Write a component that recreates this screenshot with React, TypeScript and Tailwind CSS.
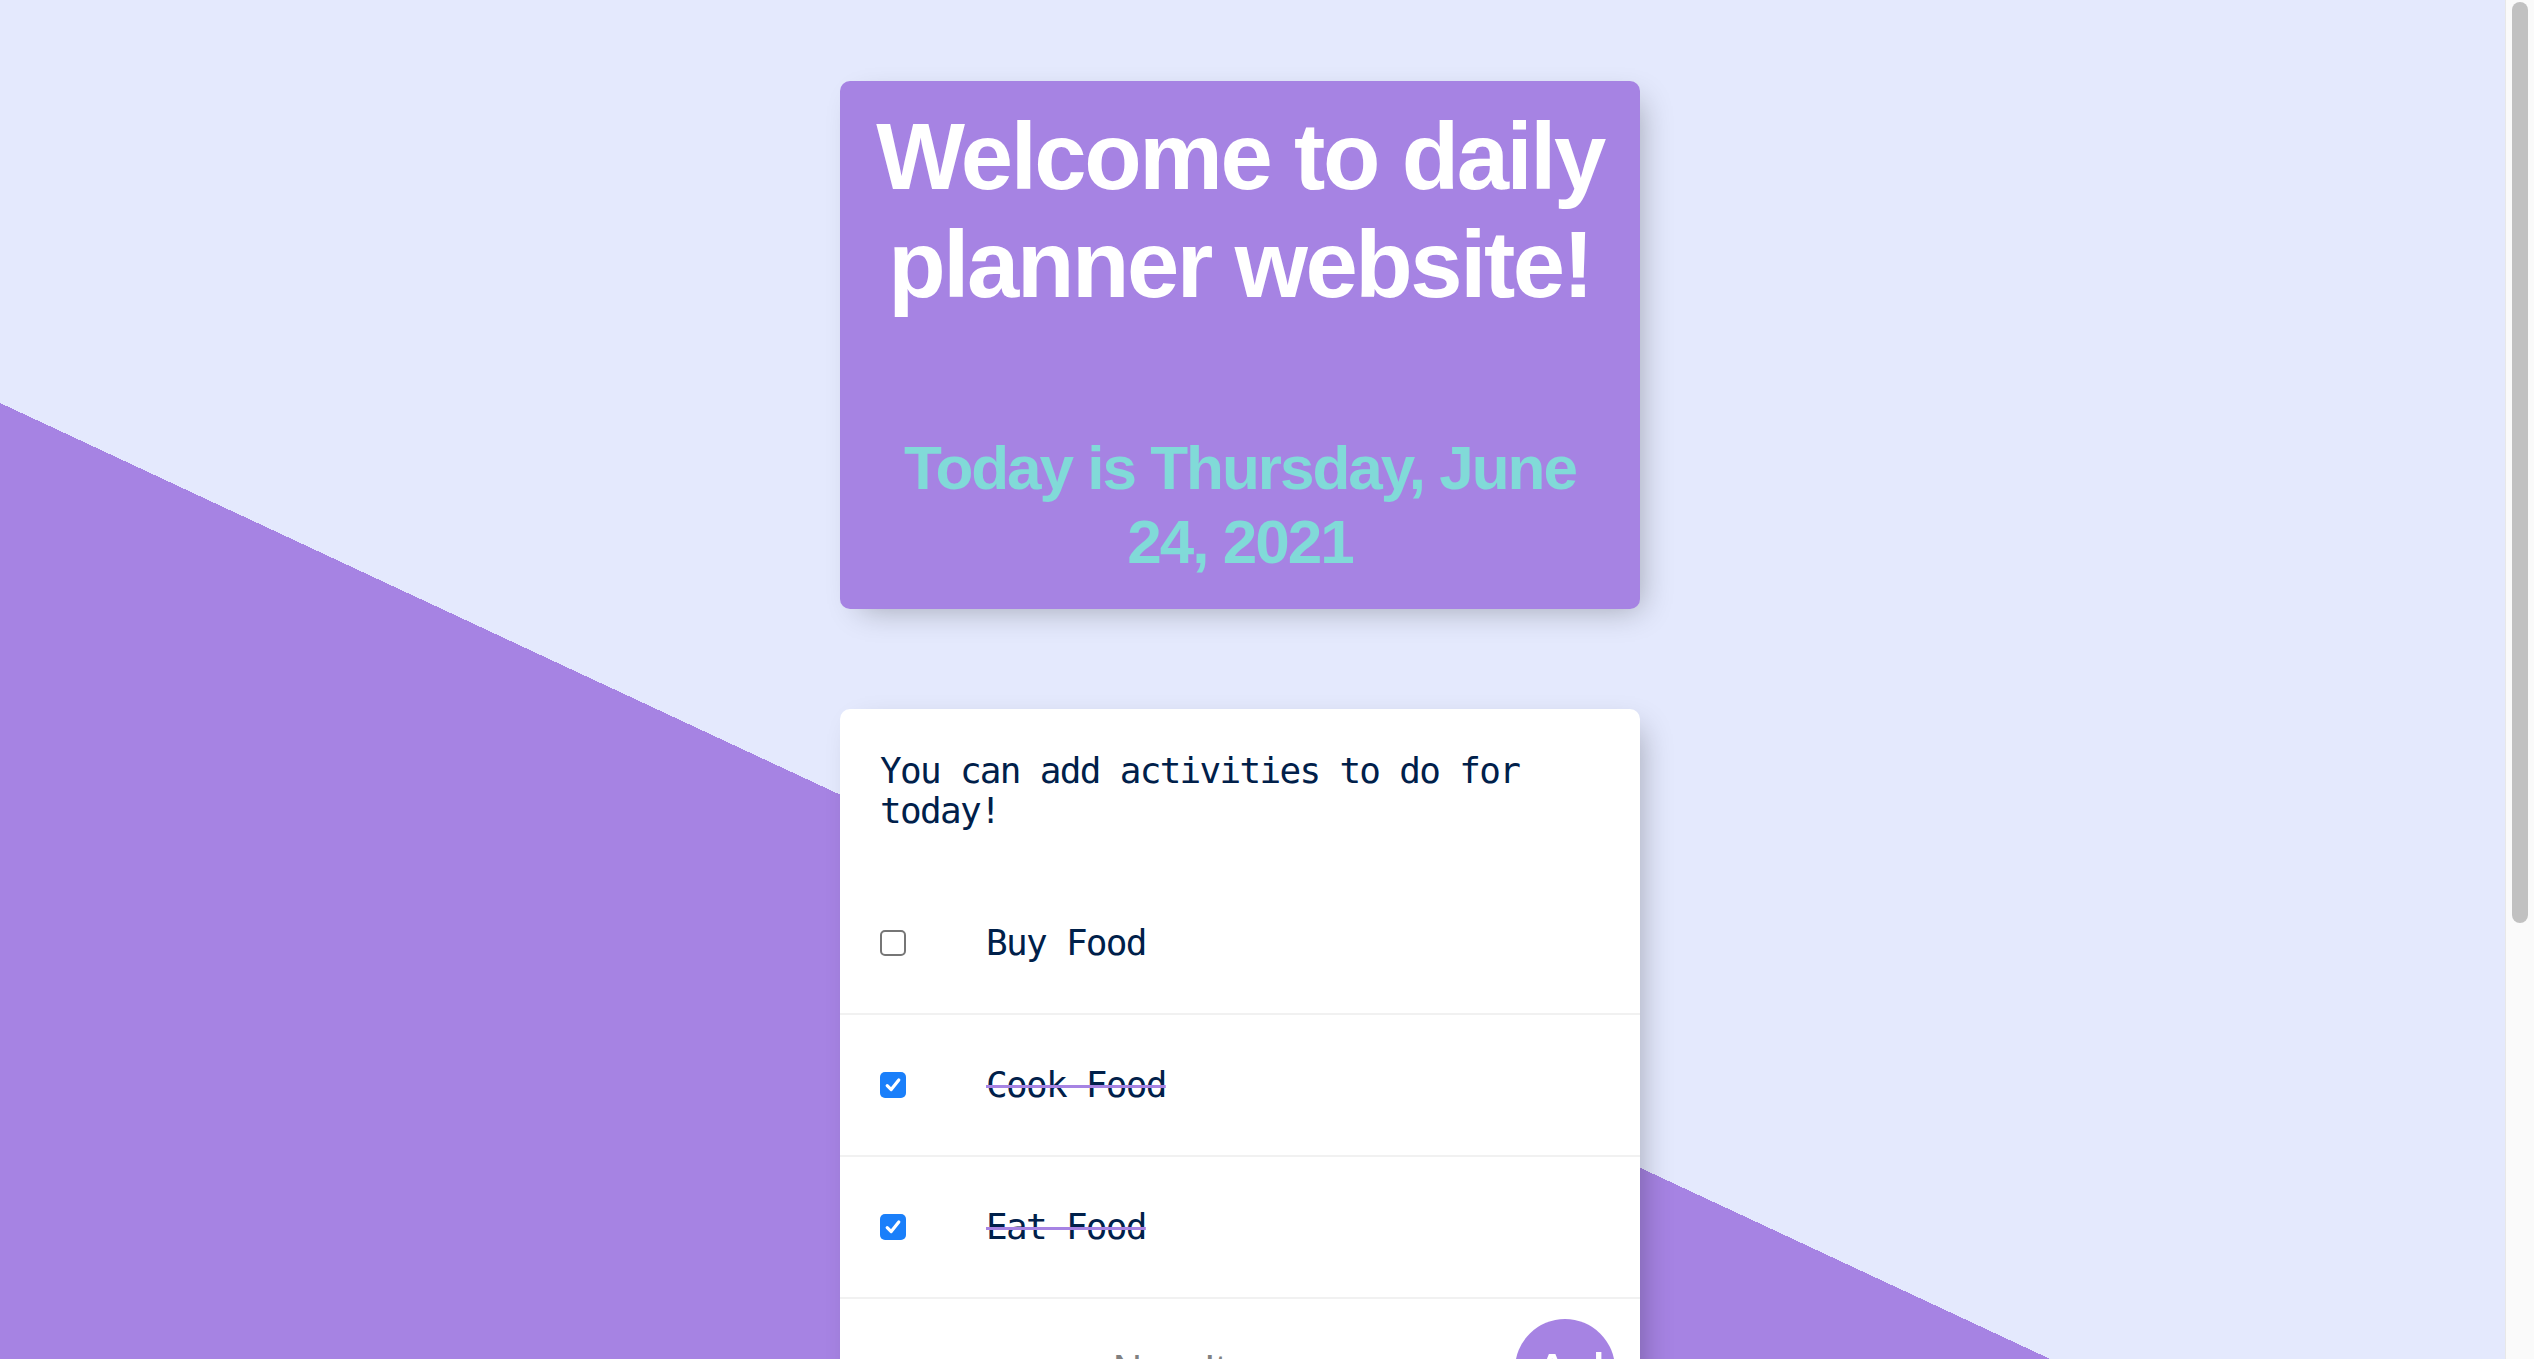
import React from "react";

type Item = { text: string; done: boolean };

const items: Item[] = [
  { text: "Buy Food", done: false },
  { text: "Cook Food", done: true },
  { text: "Eat Food", done: true },
];

function Checkbox({ checked }: { checked: boolean }) {
  if (checked) {
    return (
      <div className="ml-[40px] mr-[40px] flex h-[26px] w-[26px] shrink-0 items-center justify-center rounded-[5px] bg-[#1a7ffa]">
        <svg width="20" height="20" viewBox="0 0 20 20">
          <path
            d="M4.2 10.6 L8.2 14.6 L15.8 5"
            fill="none"
            stroke="#ffffff"
            strokeWidth="3.2"
            strokeLinecap="round"
            strokeLinejoin="round"
          />
        </svg>
      </div>
    );
  }
  return (
    <div className="ml-[40px] mr-[40px] h-[26px] w-[26px] shrink-0 rounded-[5px] border-2 border-[#767676] bg-white" />
  );
}

export default function App() {
  return (
    <div className="flex h-screen w-full overflow-hidden">
      <div className="h-screen flex-1 overflow-hidden">
        <div className="min-h-[1974px] bg-[linear-gradient(25deg,#A683E3_50%,#E4E9FD_50%)] pr-[25px] pt-[81px]">
          {/* Heading box */}
          <div className="mx-auto w-[800px] rounded-[10px] bg-[#A683E3] px-[20px] pb-[30px] pt-[22px] text-center font-['Liberation_Sans',Arial,sans-serif] font-bold shadow-[10px_10px_30px_-10px_rgba(0,0,0,0.3)]">
            <h1 className="text-[94px] leading-[108px] tracking-[-2.4px] text-white">
              Welcome to daily planner website!
            </h1>
            <h2 className="mt-[112px] text-[62px] leading-[74px] tracking-[-2px] text-[#81dad8]">
              Today is Thursday, June 24, 2021
            </h2>
          </div>

          {/* List box */}
          <div className="mx-auto mt-[100px] w-[800px] rounded-[10px] bg-white shadow-[10px_10px_30px_-10px_rgba(0,0,0,0.3)]">
            <p className="px-[40px] pb-[42px] pt-[42px] font-['DejaVu_Sans_Mono',monospace] text-[36px] leading-[40px] tracking-[-1.7px] text-[#00204a]">
              You can add activities to do for today!
            </p>
            {items.map((it) => (
              <div
                key={it.text}
                className="flex min-h-[142px] items-center border-b-2 border-[#F1F1F1]"
              >
                <Checkbox checked={it.done} />
                <p
                  className={
                    it.done
                      ? "px-[40px] font-['DejaVu_Sans_Mono',monospace] text-[36px] leading-[40px] tracking-[-1.7px] text-[#00204a] line-through decoration-[#A683E3] decoration-[3px]"
                      : "px-[40px] font-['DejaVu_Sans_Mono',monospace] text-[36px] leading-[40px] tracking-[-1.7px] text-[#00204a]"
                  }
                >
                  {it.text}
                </p>
              </div>
            ))}
            <form className="ml-[40px] flex min-h-[140px] items-center">
              <input
                type="text"
                placeholder="New Item"
                autoComplete="off"
                className="h-[120px] w-[635px] bg-transparent text-center font-['Liberation_Sans',Arial,sans-serif] text-[40px] text-black outline-none placeholder:text-[#808080]"
              />
              <button
                type="button"
                className="h-[100px] w-[100px] shrink-0 overflow-hidden whitespace-nowrap rounded-full bg-[#A683E3] pl-[17px] pt-[10px] text-left font-['Liberation_Sans',Arial,sans-serif] text-[60px] leading-[69px] text-white"
              >
                <span className="block">Add</span>
              </button>
            </form>
          </div>
        </div>
      </div>

      {/* Scrollbar */}
      <div className="flex h-screen w-[29px] shrink-0 border-l border-[#e8e8e8] bg-[#fafafa]">
        <div className="ml-[6px] mt-[2px] h-[921px] w-[16px] rounded-[8px] bg-[#c1c1c1]" />
      </div>
    </div>
  );
}
